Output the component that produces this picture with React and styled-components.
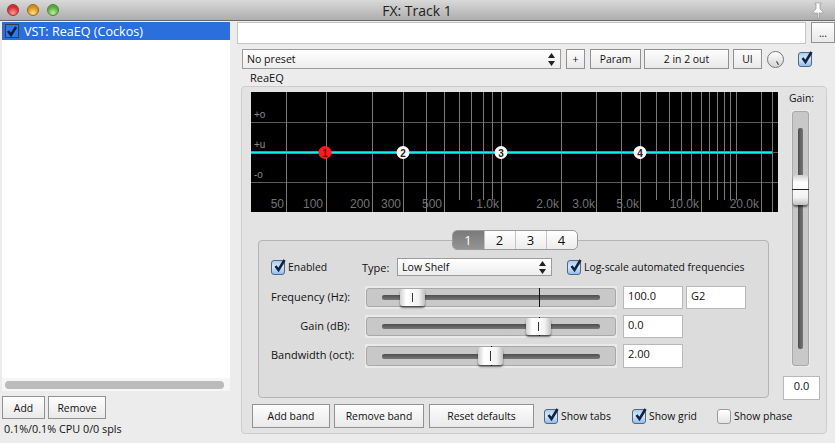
import React from "react";
import styled, { createGlobalStyle } from "styled-components";

const GlobalStyle = createGlobalStyle`
  html, body {
    margin: 0;
    padding: 0;
    overflow: hidden;
    background: #ececec;
  }
  * {
    box-sizing: border-box;
  }
`;

const Window = styled.div`
  width: 835px;
  height: 443px;
  display: flex;
  flex-direction: column;
  background: #ececec;
  color: #111;
  font-family: "Open Sans", "DejaVu Sans", sans-serif;
  font-size: 11px;
  overflow: hidden;
`;

const TitleBar = styled.div`
  height: 21px;
  flex: none;
  display: flex;
  align-items: center;
  padding: 0 10px 0 7px;
  background: linear-gradient(#d9d9d9, #adadad);
  border-bottom: 1px solid #6b6b6b;
`;

const Lights = styled.div`
  display: flex;
  gap: 8px;
  width: 58px;
`;

const Light = styled.div`
  width: 12px;
  height: 12px;
  flex: none;
  border-radius: 50%;
  border: 1px solid ${p => p.$edge};
  background: radial-gradient(circle at 50% 80%, ${p => p.$glow}, ${p => p.$color} 65%);
`;

const Title = styled.div`
  flex: 1;
  text-align: center;
  font-size: 14px;
  color: #222;
  padding-right: 42px;
`;

const Body = styled.div`
  flex: 1;
  display: flex;
  min-height: 0;
`;

const LeftPane = styled.div`
  width: 237px;
  flex: none;
  display: flex;
  flex-direction: column;
  padding: 1px 7px 0 2px;
`;

const PluginList = styled.div`
  height: 356px;
  background: #fff;
`;

const PluginRow = styled.div`
  height: 18px;
  display: flex;
  align-items: center;
  gap: 5px;
  padding-left: 3px;
  background: #2a6fdc;
  color: #fff;
  font-size: 12.6px;
`;

const ScrollTrack = styled.div`
  height: 13px;
  padding: 3px 6px 2px 3px;
  background: #f6f6f6;
`;

const ScrollThumb = styled.div`
  height: 8px;
  border-radius: 4px;
  background: #bbb;
`;

const LeftButtons = styled.div`
  display: flex;
  gap: 3px;
  margin-top: 5px;
`;

const Button = styled.div`
  width: ${p => p.$w}px;
  height: ${p => p.$h || 20}px;
  flex: none;
  display: flex;
  align-items: center;
  justify-content: center;
  border: 1px solid #919191;
  background: linear-gradient(#fdfdfd, #e9e9e9);
  color: #111;
  font-size: 10.4px;
`;

const Status = styled.div`
  margin: 3px 0 0 2px;
  line-height: 14px;
  font-size: 10.8px;
`;

const RightPane = styled.div`
  flex: 1;
  display: flex;
  flex-direction: column;
  min-width: 0;
  padding-top: 1px;
`;

const TopRow = styled.div`
  display: flex;
  gap: 5px;
`;

const NameInput = styled.div`
  width: 569px;
  height: 22px;
  background: #fff;
  border: 1px solid #c4c4c4;
`;

const PresetRow = styled.div`
  display: flex;
  align-items: center;
  height: 20px;
  margin: 5px 0 0 5px;
`;

const Select = styled.div`
  width: ${p => p.$w}px;
  height: ${p => p.$h}px;
  flex: none;
  display: flex;
  align-items: center;
  justify-content: space-between;
  padding: 0 5px 0 4px;
  border: 1px solid #9c9c9c;
  background: linear-gradient(#fff, #ededed);
  font-size: 10.6px;
`;

const Gap = styled.div`
  width: ${p => p.$w}px;
  flex: none;
`;

const Knob = styled.div`
  position: relative;
  width: 17px;
  height: 17px;
  flex: none;
  border-radius: 50%;
  border: 1px solid #777;
  background: linear-gradient(#fff, #d4d4d4);
  &::after {
    content: "";
    position: absolute;
    left: 9px;
    top: 9px;
    width: 1px;
    height: 4px;
    background: #333;
    transform: rotate(-30deg);
  }
`;

const GroupLabel = styled.div`
  height: 17px;
  line-height: 18px;
  padding-left: 13px;
`;

const GroupBox = styled.div`
  width: 586px;
  height: 348px;
  margin-left: 4px;
  display: flex;
  padding: 5px 0 0 9px;
  background: #e3e3e3;
  border: 1px solid #cdcdcd;
  border-radius: 4px;
`;

const MainCol = styled.div`
  width: 527px;
  flex: none;
  display: flex;
  flex-direction: column;
`;

const GraphSvg = styled.svg`
  display: block;
  flex: none;
  font-family: "Liberation Sans", sans-serif;
`;

const TabsWrap = styled.div`
  position: relative;
  z-index: 1;
  display: flex;
  justify-content: center;
  margin: 18px 0 -10px 0;
`;

const Tabs = styled.div`
  display: flex;
  height: 20px;
  border: 1px solid #9a9a9a;
  border-radius: 5px;
  background: linear-gradient(#fff, #ececec);
  overflow: hidden;
`;

const Tab = styled.div`
  width: 31px;
  display: flex;
  align-items: center;
  justify-content: center;
  font-size: 13px;
  color: ${p => (p.$active ? "#fff" : "#111")};
  background: ${p => (p.$active ? "linear-gradient(#7a7a7a, #949494)" : "transparent")};
  & + & {
    border-left: 1px solid #c4c4c4;
  }
`;

const BandPanel = styled.div`
  width: 511px;
  height: 158px;
  margin-left: 7px;
  padding: 17px 0 0 12px;
  background: #dcdcdc;
  border: 1px solid #b4b4b4;
  border-radius: 4px;
`;

const BandTop = styled.div`
  display: flex;
  align-items: center;
  height: 18px;
  margin-bottom: 10px;
`;

const CheckLabel = styled.div`
  display: flex;
  align-items: center;
  gap: 3px;
  flex: none;
  width: ${p => (p.$w ? `${p.$w}px` : "auto")};
  font-size: 10.4px;
`;

const TypeLabel = styled.div`
  width: 35px;
  flex: none;
`;

const CheckBox = styled.div`
  width: 14px;
  height: 15px;
  flex: none;
  border: 1px solid ${p => (p.$on ? "#55657c" : "#9a9a9a")};
  border-radius: 3px;
  background: ${p =>
    p.$on ? "linear-gradient(#a9cdf6, #d6e8fb 45%, #8fbdf2)" : "linear-gradient(#fff, #e4e4e4)"};
  & svg {
    display: block;
    margin: -3px 0 0 0;
  }
`;

const ListCheck = styled.div`
  width: 14px;
  height: 14px;
  flex: none;
  border: 1px solid #3d3d3d;
  background: #2f79e8;
  & svg {
    display: block;
  }
`;

const SliderRow = styled.div`
  display: flex;
  height: ${p => p.$h || 23}px;
  margin-bottom: ${p => p.$mb || 6}px;
`;

const RowLabel = styled.div`
  width: 79px;
  margin-right: 15px;
  flex: none;
  text-align: right;
  line-height: 22px;
  white-space: nowrap;
`;

const SliderHalo = styled.div`
  width: 252px;
  margin-right: 6px;
  flex: none;
  padding: 2px 1px;
  background: #eaeaea;
`;

const SliderTrack = styled.div`
  position: relative;
  height: 100%;
  display: flex;
  align-items: center;
  padding: 0 15px;
  background: #c8c8c8;
  border: 1px solid #a8a8a8;
  border-radius: 3px;
`;

const Groove = styled.div`
  width: 100%;
  height: 5px;
  border-radius: 2px;
  background: linear-gradient(#4e4e4e, #777);
`;

const CenterTick = styled.div`
  position: absolute;
  top: -1px;
  bottom: -1px;
  left: ${p => p.$at}px;
  width: 1px;
  background: #111;
`;

const Thumb = styled.div`
  position: absolute;
  top: 0;
  bottom: 0;
  left: ${p => p.$at}px;
  width: 25px;
  border-radius: 3px;
  background: linear-gradient(90deg, #d0d0d0, #fff 25%, #f2f2f2 75%, #c0c0c0);
  box-shadow: 0 2px 2px rgba(0, 0, 0, 0.55);
  &::after {
    content: "";
    position: absolute;
    left: 12px;
    top: 4px;
    bottom: 4px;
    width: 1px;
    background: #333;
  }
`;

const ValueBox = styled.div`
  width: ${p => p.$w || 60}px;
  height: ${p => p.$h || 23}px;
  margin-left: ${p => p.$ml || 0}px;
  margin-top: ${p => p.$mt || 0}px;
  flex: none;
  padding: 0 4px;
  line-height: 17px;
  background: #fff;
  border: 1px solid #b8b8b8;
  text-align: ${p => p.$align || "left"};
`;

const BottomRow = styled.div`
  display: flex;
  align-items: center;
  height: 24px;
  margin: 6px 0 0 1px;
`;

const GainCol = styled.div`
  width: 37px;
  margin-left: 5px;
  flex: none;
  display: flex;
  flex-direction: column;
  align-items: center;
`;

const GainLabel = styled.div`
  height: 18px;
  line-height: 12px;
  font-size: 10.4px;
`;

const VSliderHalo = styled.div`
  width: 19px;
  height: 257px;
  align-self: flex-start;
  margin-left: 8px;
  padding: 1px 1px;
  background: #eaeaea;
`;

const VSliderTrack = styled.div`
  position: relative;
  height: 100%;
  display: flex;
  justify-content: center;
  padding: 16px 0;
  background: #c8c8c8;
  border: 1px solid #a8a8a8;
  border-radius: 3px;
`;

const VGroove = styled.div`
  width: 5px;
  height: 100%;
  border-radius: 2px;
  background: linear-gradient(90deg, #4e4e4e, #777);
`;

const VThumb = styled.div`
  position: absolute;
  top: 63px;
  left: 0;
  width: 15px;
  height: 30px;
  border-radius: 3px;
  background: linear-gradient(#d0d0d0, #fff 25%, #f2f2f2 75%, #c0c0c0);
  box-shadow: 0 2px 2px rgba(0, 0, 0, 0.55);
  &::after {
    content: "";
    position: absolute;
    left: -1px;
    right: -1px;
    top: 14px;
    height: 1px;
    background: #222;
  }
`;

const Tick = () => (
  <svg width="16" height="16" viewBox="0 0 16 16">
    <path d="M3.5 8 L6.5 12 L12.5 2" fill="none" stroke="#12233f" strokeWidth="2.6" />
  </svg>
);

const Check = ({ on = true, label, w }) => (
  <CheckLabel $w={w}>
    <CheckBox $on={on}>{on && <Tick />}</CheckBox>
    {label}
  </CheckLabel>
);

const UpDown = () => (
  <svg width="7" height="13" viewBox="0 0 7 13">
    <path d="M3.5 0 L7 5 L0 5 Z M0 8 L7 8 L3.5 13 Z" fill="#222" />
  </svg>
);

const Pin = () => (
  <svg width="14" height="17" viewBox="0 0 14 17">
    <path
      d="M4 1 H10 V2 H9 V7 L12 10 V11 H8 V16 H6.5 V11 H2 V10 L5 7 V2 H4 Z"
      fill="#fafafa"
      stroke="#8d8d8d"
      strokeWidth="0.6"
    />
  </svg>
);

const GRID_X = [286, 326, 372, 403, 426, 444, 501, 561, 596, 621, 640, 701, 761, 772];
const SHORT_X = [459, 471, 483, 492, 656, 669, 681, 691, 709, 717, 724, 730, 736];
const GRID_Y = [122, 152, 182];
const HZ_LABELS = [
  ["50", 284],
  ["100", 323],
  ["200", 370],
  ["300", 401],
  ["500", 442],
  ["1.0k", 499],
  ["2.0k", 559],
  ["3.0k", 595],
  ["5.0k", 639],
  ["10.0k", 699],
  ["20.0k", 759]
];
const DB_LABELS = [
  ["+o", 118],
  ["+u", 148],
  ["-o", 178]
];
const NODES = [
  [325, "1", true],
  [403, "2"],
  [501, "3"],
  [640, "4"]
];

const Graph = () => (
  <GraphSvg width="527" height="120" viewBox="251 92 527 120">
    <rect x="251" y="92" width="527" height="120" fill="#000" />
    {GRID_Y.map(y => (
      <rect key={y} x="251" y={y} width="527" height="1" fill="#5a5a5a" />
    ))}
    {GRID_X.map(x => (
      <rect key={x} x={x} y="92" width="1" height="120" fill="#7a7a7a" />
    ))}
    {SHORT_X.map(x => (
      <rect key={x} x={x} y="92" width="1" height="108" fill="#7a7a7a" />
    ))}
    {HZ_LABELS.map(([text, x]) => (
      <text key={text} x={x} y="208" textAnchor="end" fontSize="12" fill="#737373">
        {text}
      </text>
    ))}
    {DB_LABELS.map(([text, y]) => (
      <text key={text} x="254" y={y} fontSize="10" fill="#8a8a8a">
        {text}
      </text>
    ))}
    <rect x="251" y="151" width="521" height="3" fill="#00b4b8" />
    <rect x="251" y="152" width="521" height="1" fill="#10eef0" />
    {NODES.map(([x, n, active]) => (
      <g key={n}>
        <circle cx={x} cy="152.5" r="6.5" fill={active ? "#ff1a1f" : "#fff"} />
        <text
          x={x}
          y="156.5"
          textAnchor="middle"
          fontSize="10"
          fontWeight="bold"
          fill={active ? "#7a1010" : "#222"}
        >
          {n}
        </text>
      </g>
    ))}
  </GraphSvg>
);

const Slider = ({ thumb, tick }) => (
  <SliderHalo>
    <SliderTrack>
      <Groove />
      <CenterTick $at={tick} />
      <Thumb $at={thumb} />
    </SliderTrack>
  </SliderHalo>
);

const App = () => (
  <Window>
    <GlobalStyle />
    <TitleBar>
      <Lights>
        <Light $color="#d9282f" $glow="#ff9a9a" $edge="#8c3a3a" />
        <Light $color="#dd8a12" $glow="#ffe08a" $edge="#94682a" />
        <Light $color="#55a83a" $glow="#bdf0a0" $edge="#4f7f3e" />
      </Lights>
      <Title>FX: Track 1</Title>
      <Pin />
    </TitleBar>
    <Body>
      <LeftPane>
        <PluginList>
          <PluginRow>
            <ListCheck>
              <svg width="12" height="12" viewBox="0 0 12 12">
                <path d="M2 6 L5 10 L10 2" fill="none" stroke="#0b1c3a" strokeWidth="2.4" />
              </svg>
            </ListCheck>
            VST: ReaEQ (Cockos)
          </PluginRow>
        </PluginList>
        <ScrollTrack>
          <ScrollThumb />
        </ScrollTrack>
        <LeftButtons>
          <Button $w={43} $h={23}>Add</Button>
          <Button $w={58} $h={23}>Remove</Button>
        </LeftButtons>
        <Status>0.1%/0.1% CPU 0/0 spls</Status>
      </LeftPane>
      <RightPane>
        <TopRow>
          <NameInput />
          <Button $w={24} $h={21}>...</Button>
        </TopRow>
        <PresetRow>
          <Select $w={319} $h={20}>
            No preset
            <UpDown />
          </Select>
          <Gap $w={5} />
          <Button $w={19}>+</Button>
          <Gap $w={5} />
          <Button $w={51}>Param</Button>
          <Gap $w={3} />
          <Button $w={85}>2 in 2 out</Button>
          <Gap $w={4} />
          <Button $w={29}>UI</Button>
          <Gap $w={5} />
          <Knob />
          <Gap $w={14} />
          <CheckBox $on>
            <Tick />
          </CheckBox>
        </PresetRow>
        <GroupLabel>ReaEQ</GroupLabel>
        <GroupBox>
          <MainCol>
            <Graph />
            <TabsWrap>
              <Tabs>
                <Tab $active>1</Tab>
                <Tab>2</Tab>
                <Tab>3</Tab>
                <Tab>4</Tab>
              </Tabs>
            </TabsWrap>
            <BandPanel>
              <BandTop>
                <Check label="Enabled" w={91} />
                <TypeLabel>Type:</TypeLabel>
                <Select $w={155} $h={18}>
                  Low Shelf
                  <UpDown />
                </Select>
                <Gap $w={15} />
                <Check label="Log-scale automated frequencies" />
              </BandTop>
              <SliderRow>
                <RowLabel>Frequency (Hz):</RowLabel>
                <Slider thumb={33} tick={172} />
                <ValueBox>100.0</ValueBox>
                <ValueBox $ml={3}>G2</ValueBox>
              </SliderRow>
              <SliderRow>
                <RowLabel>Gain (dB):</RowLabel>
                <Slider thumb={159} tick={172} />
                <ValueBox>0.0</ValueBox>
              </SliderRow>
              <SliderRow $h={24}>
                <RowLabel>Bandwidth (oct):</RowLabel>
                <Slider thumb={111} tick={124} />
                <ValueBox $h={24}>2.00</ValueBox>
              </SliderRow>
            </BandPanel>
            <BottomRow>
              <Button $w={78} $h={24}>Add band</Button>
              <Gap $w={4} />
              <Button $w={90} $h={24}>Remove band</Button>
              <Gap $w={5} />
              <Button $w={105} $h={24}>Reset defaults</Button>
              <Gap $w={10} />
              <Check label="Show tabs" w={88} />
              <Check label="Show grid" w={85} />
              <Check on={false} label="Show phase" />
            </BottomRow>
          </MainCol>
          <GainCol>
            <GainLabel>Gain:</GainLabel>
            <VSliderHalo>
              <VSliderTrack>
                <VGroove />
                <VThumb />
              </VSliderTrack>
            </VSliderHalo>
            <ValueBox $w={37} $h={24} $mt={9} $align="center">0.0</ValueBox>
          </GainCol>
        </GroupBox>
      </RightPane>
    </Body>
  </Window>
);

export default App;
